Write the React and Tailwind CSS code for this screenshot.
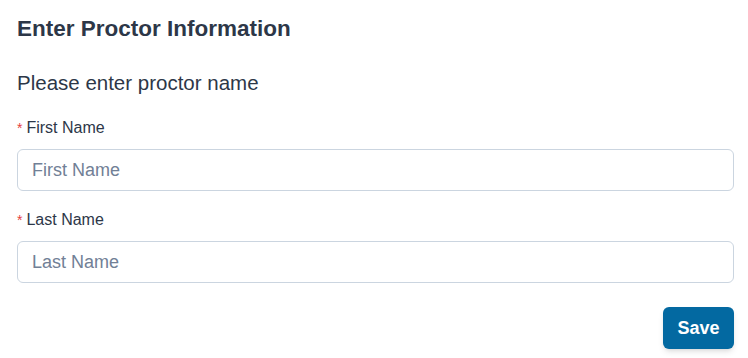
import { useState } from 'react'

const Field = ({ label, value, onChange }) => {
	return (
		<div className="flex flex-col">
			<label className="flex items-center h-5 text-[16px] text-[#2d3748]">
				<span className="text-[#e53e3e] mr-1 text-[14px]">*</span>
				{label}
			</label>
			<input
				value={value}
				onChange={onChange}
				placeholder={label}
				className="mt-[11px] h-[42px] w-full rounded-md border border-[#cbd5e0] bg-white px-[14px] text-[18px] text-[#2d3748] placeholder:text-[#718096] outline-none"
			/>
		</div>
	)
}

const App = () => {
	const [firstName, setFirstName] = useState('')
	const [lastName, setLastName] = useState('')

	return (
		<div className="w-[748px] h-[358px] bg-white pl-[17px] pr-[14px] pt-[15px] font-['Liberation_Sans',Arial,sans-serif]">
			<h2 className="h-7 leading-7 text-[22.5px] font-bold text-[#2d3748]">Enter Proctor Information</h2>
			<p className="mt-[26px] h-7 leading-7 text-[20.5px] text-[#2d3748]">Please enter proctor name</p>

			<div className="mt-[21px]">
				<Field label="First Name" value={firstName} onChange={(e) => setFirstName(e.target.value)} />
			</div>
			<div className="mt-[19px]">
				<Field label="Last Name" value={lastName} onChange={(e) => setLastName(e.target.value)} />
			</div>

			<div className="mt-6 flex justify-end">
				<button className="h-[42px] w-[71px] rounded-md bg-[#0369a1] text-[18px] font-bold text-white shadow-md">
					Save
				</button>
			</div>
		</div>
	)
}

export default App
